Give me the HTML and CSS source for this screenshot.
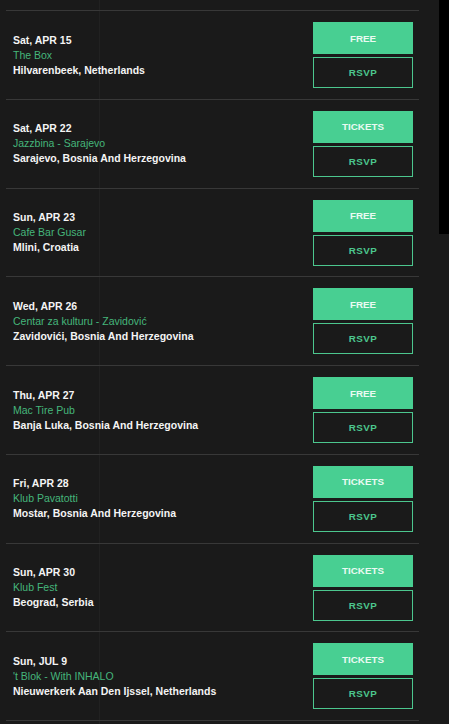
FILE: index.html
```html
<!DOCTYPE html>
<html lang="en">
<head>
<meta charset="utf-8">
<title>Tour dates</title>
<link rel="stylesheet" href="styles.css">
</head>
<body>
<div class="side-panel"></div>
<main class="events">
  <div class="event">
    <div class="info"><div class="date">Sat, APR 15</div><div class="venue">The Box</div><div class="place">Hilvarenbeek, Netherlands</div></div>
    <div class="actions"><a class="btn btn-fill">FREE</a><a class="btn btn-outline">RSVP</a></div>
  </div>
  <div class="event">
    <div class="info"><div class="date">Sat, APR 22</div><div class="venue">Jazzbina - Sarajevo</div><div class="place">Sarajevo, Bosnia And Herzegovina</div></div>
    <div class="actions"><a class="btn btn-fill">TICKETS</a><a class="btn btn-outline">RSVP</a></div>
  </div>
  <div class="event">
    <div class="info"><div class="date">Sun, APR 23</div><div class="venue">Cafe Bar Gusar</div><div class="place">Mlini, Croatia</div></div>
    <div class="actions"><a class="btn btn-fill">FREE</a><a class="btn btn-outline">RSVP</a></div>
  </div>
  <div class="event">
    <div class="info"><div class="date">Wed, APR 26</div><div class="venue">Centar za kulturu - Zavidović</div><div class="place">Zavidovići, Bosnia And Herzegovina</div></div>
    <div class="actions"><a class="btn btn-fill">FREE</a><a class="btn btn-outline">RSVP</a></div>
  </div>
  <div class="event">
    <div class="info"><div class="date">Thu, APR 27</div><div class="venue">Mac Tire Pub</div><div class="place">Banja Luka, Bosnia And Herzegovina</div></div>
    <div class="actions"><a class="btn btn-fill">FREE</a><a class="btn btn-outline">RSVP</a></div>
  </div>
  <div class="event">
    <div class="info"><div class="date">Fri, APR 28</div><div class="venue">Klub Pavatotti</div><div class="place">Mostar, Bosnia And Herzegovina</div></div>
    <div class="actions"><a class="btn btn-fill">TICKETS</a><a class="btn btn-outline">RSVP</a></div>
  </div>
  <div class="event">
    <div class="info"><div class="date">Sun, APR 30</div><div class="venue">Klub Fest</div><div class="place">Beograd, Serbia</div></div>
    <div class="actions"><a class="btn btn-fill">TICKETS</a><a class="btn btn-outline">RSVP</a></div>
  </div>
  <div class="event">
    <div class="info"><div class="date">Sun, JUL 9</div><div class="venue">'t Blok - With INHALO</div><div class="place">Nieuwerkerk Aan Den Ijssel, Netherlands</div></div>
    <div class="actions"><a class="btn btn-fill">TICKETS</a><a class="btn btn-outline">RSVP</a></div>
  </div>
</main>
</body>
</html>
```
FILE: styles.css
```css
html, body {
  margin: 0;
  padding: 0;
}
body {
  background-color: #1a1a1a;
  background-image:
    linear-gradient(to right, transparent 99px, #212121 99px, #212121 100px, transparent 100px);
  font-family: "Liberation Sans", Arial, sans-serif;
  height: 724px;
  overflow: hidden;
}
.side-panel {
  position: absolute;
  top: 0;
  right: 0;
  width: 10px;
  height: 234px;
  background: #000;
}
.events {
  margin: 10px 30px 0 6px;
}
.event {
  display: flex;
  align-items: center;
  justify-content: space-between;
  border-top: 1px solid #383838;
  padding: 11px 6px 10.75px 7px;
}
.event:last-child {
  border-bottom: 1px solid #383838;
}
.info {
  font-size: 10.5px;
  line-height: 15px;
}
.date, .place {
  color: #f4f4f4;
  font-weight: bold;
}
.venue {
  color: #45b67a;
}
.actions {
  display: flex;
  flex-direction: column;
  gap: 3px;
  width: 100px;
}
.btn {
  display: flex;
  align-items: center;
  justify-content: center;
  box-sizing: border-box;
  font-size: 9.8px;
  font-weight: bold;
  text-decoration: none;
}
.btn-fill {
  height: 32px;
  background: #48cf92;
  color: #eafaf2;
}
.btn-outline {
  height: 31px;
  border: 1px solid #4cc78e;
  color: #4cc78e;
  letter-spacing: 0.4px;
}
```
